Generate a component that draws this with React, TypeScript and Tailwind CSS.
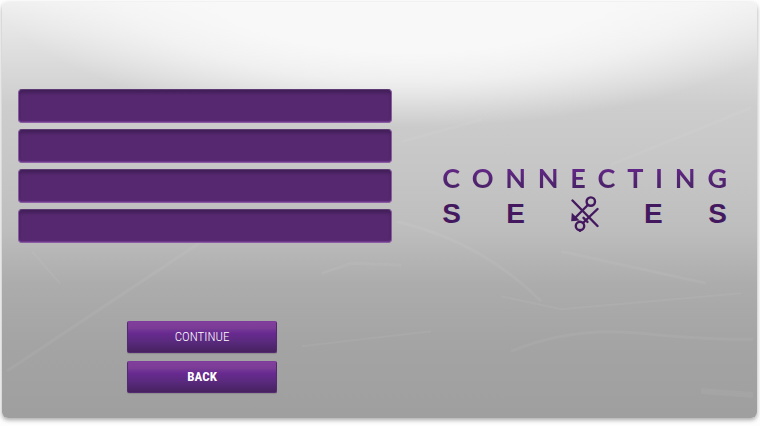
import React from "react";

const fields = ["First field", "Second field", "Third field", "Fourth field"];

const buttonBase =
  "h-8 w-full rounded-xs border border-[#532a72] border-t-[#7d3b9b] bg-[linear-gradient(180deg,#823f9b_0%,#7a3c96_20%,#682a90_38%,#5a2a7e_65%,#46215f_100%)] font-['Roboto_Condensed','Liberation_Sans_Narrow','Liberation_Sans',sans-serif] text-[13px] text-white shadow-[0_1px_1px_#8c8c8c]";

function Scratches() {
  return (
    <svg
      aria-hidden="true"
      className="pointer-events-none absolute inset-0 h-full w-full"
      viewBox="0 0 756 417"
      preserveAspectRatio="none"
      fill="none"
      stroke="#ffffff"
      strokeOpacity="0.05"
    >
      <path d="M5 370 L200 240" strokeWidth="3" />
      <path d="M400 140 L480 118 M610 163 L750 106" strokeWidth="3" />
      <path d="M395 220 Q480 240 540 300" strokeWidth="3" />
      <path d="M560 250 L705 282 M320 272 L350 262 L400 264" strokeWidth="3" />
      <path d="M510 350 Q570 325 640 332 T752 338" strokeWidth="3" />
      <path d="M500 295 L560 308 L740 292" strokeWidth="2" />
      <path d="M300 345 L430 330 M30 250 L58 282" strokeWidth="2" />
      <path d="M700 390 L752 394" strokeWidth="6" />
    </svg>
  );
}

function CrossedArrows() {
  return (
    <svg
      role="img"
      aria-label="X"
      className="h-9 w-7 shrink-0"
      viewBox="0 0 28 36"
      fill="none"
      stroke="#43185f"
      strokeWidth="2.4"
      strokeLinecap="round"
    >
      <path d="M1.5 4.5 L26.5 30" />
      <circle cx="19.8" cy="5.6" r="4.2" />
      <path d="M16.8 9 L3 23" />
      <path d="M1.8 19.5 L1.5 24 L6 23.5 Z" fill="#43185f" />
      <path d="M26.5 13 L12 27" />
      <path d="M12.5 21.8 L16.5 26" />
      <circle cx="9" cy="30" r="4.2" />
      <path d="M9 34 V34.8" />
    </svg>
  );
}

function Logo() {
  return (
    <div className="flex w-full flex-col gap-0.5">
      <div className="flex items-center justify-between bg-linear-to-b from-[#6b2990] to-[#42205f] bg-clip-text font-['Lato',sans-serif] text-[27px] leading-8 font-bold text-transparent">
        {"CONNECTING".split("").map((letter, i) => (
          <span key={i}>{letter}</span>
        ))}
      </div>
      <div className="flex h-9 items-center justify-between font-['Liberation_Sans',Arial,sans-serif] text-[28px] leading-9 font-bold text-[#43185f]">
        <span>S</span>
        <span>E</span>
        <CrossedArrows />
        <span>E</span>
        <span>S</span>
      </div>
    </div>
  );
}

export default function App() {
  return (
    <div className="flex min-h-screen bg-[#fdfdfd] pt-0.5 pr-[3px] pb-2 pl-0.5">
      <main className="relative grid flex-1 grid-cols-[53fr_47fr] rounded-md bg-[radial-gradient(ellipse_56%_36%_at_54%_-6%,#f8f8f8_0%,#f8f8f8_50%,#f8f8f8bb_70%,#f8f8f855_86%,#f8f8f800_100%),linear-gradient(180deg,#efefef_0%,#dedede_12%,#cdcdcd_25%,#c5c5c5_42%,#bdbdbd_55%,#acacac_68%,#a4a4a4_82%,#9f9f9f_100%)] shadow-[0_2px_4px_#a8a8a8]">
        <Scratches />
        <form
          className="relative flex flex-col items-center pt-[87px] pr-2.5 pb-6 pl-4"
          onSubmit={(e) => e.preventDefault()}
        >
          <div className="flex w-full flex-col gap-1.5">
            {fields.map((name) => (
              <input
                key={name}
                type="text"
                aria-label={name}
                className="h-[34px] w-full rounded-sm border border-[#8a5ba3] border-t-[#5e3a73] bg-[#55286f] px-3 text-white shadow-[inset_0_3px_3px_#43205a,inset_0_-1px_1px_#703a8c] outline-none"
              />
            ))}
          </div>
          <div className="mt-[78px] mr-1.5 flex w-[150px] flex-col gap-2">
            <button type="submit" className={`${buttonBase} font-light`}>
              CONTINUE
            </button>
            <button type="button" className={`${buttonBase} font-bold`}>
              BACK
            </button>
          </div>
        </form>
        <section className="relative pt-[160px] pr-[30px] pl-10">
          <Logo />
        </section>
      </main>
    </div>
  );
}
